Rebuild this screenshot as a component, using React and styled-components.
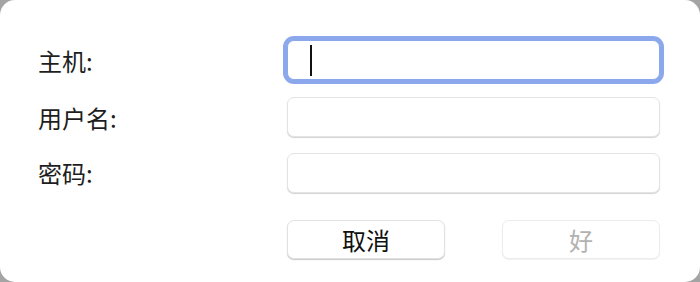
import React from "react";
import styled, { createGlobalStyle } from "styled-components";

const Global = createGlobalStyle`
  html, body {
    margin: 0;
    padding: 0;
    background: #a4a4a4;
  }
  body {
    font-family: "Noto Sans CJK SC", "Noto Sans", sans-serif;
  }
`;

const Window = styled.div`
  box-sizing: border-box;
  width: 700px;
  height: 282px;
  background: #ffffff;
  border-radius: 15px;
  padding: 40px 40px 23px 38px;
  display: flex;
  flex-direction: column;
`;

const Form = styled.div`
  display: grid;
  grid-template-columns: 249px 373px;
  grid-auto-rows: 40px;
  row-gap: 16.5px;
  align-items: center;
`;

const Label = styled.div`
  font-size: 24px;
  color: #1e1e1e;
  line-height: 1;
  margin-top: ${(p) => p.$dy || 0}px;
`;

const Field = styled.div`
  box-sizing: border-box;
  height: 40px;
  background: #fff;
  border: 1px solid ${(p) => (p.$focused ? "#8ca8ec" : "#e4e4e4")};
  border-radius: 7px;
  box-shadow: ${(p) =>
    p.$focused
      ? "0 0 0 4px #8ca8ec"
      : "0 1px 1px rgba(0,0,0,0.18)"};
  display: flex;
  align-items: center;
  padding-left: 22px;
`;

const Caret = styled.span`
  width: 1.5px;
  height: 31px;
  background: #111;
`;

const Actions = styled.div`
  margin-top: 27px;
  margin-left: 249px;
  width: 373px;
  display: flex;
  justify-content: space-between;
`;

const Button = styled.div`
  box-sizing: border-box;
  width: 158px;
  height: 39px;
  border-radius: 7px;
  background: #fff;
  border: 1px solid ${(p) => (p.$disabled ? "#ececec" : "#e2e2e2")};
  box-shadow: ${(p) =>
    p.$disabled ? "0 1px 1px rgba(0,0,0,0.06)" : "0 1px 1px rgba(0,0,0,0.22)"};
  display: flex;
  align-items: center;
  justify-content: center;
  font-size: 24px;
  color: ${(p) => (p.$disabled ? "#b2b2b2" : "#111")};
`;

export default function App() {
  return (
    <>
      <Global />
      <Window>
        <Form>
          <Label $dy={2}>主机:</Label>
          <Field $focused>
            <Caret />
          </Field>
          <Label $dy={2}>用户名:</Label>
          <Field />
          <Label $dy={0}>密码:</Label>
          <Field />
        </Form>
        <Actions>
          <Button>取消</Button>
          <Button $disabled>好</Button>
        </Actions>
      </Window>
    </>
  );
}
